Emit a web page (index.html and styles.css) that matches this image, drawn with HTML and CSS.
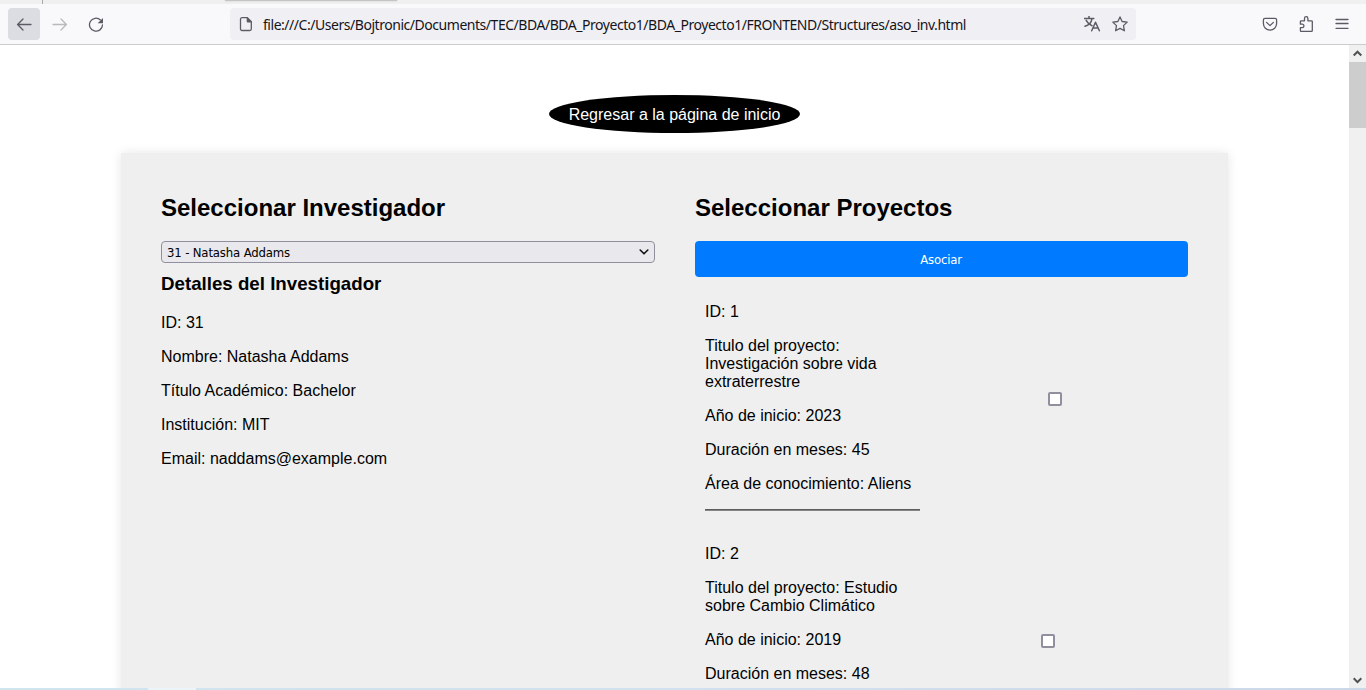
FILE: index.html
```html
<!DOCTYPE html>
<html lang="es">
<head>
<meta charset="utf-8">
<title>Asociar investigador</title>
<link rel="stylesheet" href="styles.css">
</head>
<body>
<div class="window">
  <div class="tabstrip"><i class="tab-divider"></i><i class="tab-shadow"></i></div>
  <header class="toolbar">
    <div class="nav">
      <span class="nav-btn active"><svg width="16" height="16" viewBox="0 0 16 16"><path d="M15 8.500H1.500M7 3 1.600 8.500 7 14"/></svg></span>
      <span class="nav-btn disabled"><svg width="16" height="16" viewBox="0 0 16 16"><path d="M1 8.500h13.500M9 3l5.400 5.500L9 14"/></svg></span>
      <span class="nav-btn"><svg width="16" height="16" viewBox="0 0 16 16"><path d="M12.400 3.900A6.500 6.500 0 1 0 14.500 8.800"/><path class="solid" d="M15 1.900v4.900a.5.500 0 0 1-.5.500H9.600z"/></svg></span>
    </div>
    <div class="urlbar">
      <svg width="16" height="16" viewBox="0 0 16 16"><path d="M4 1.700h5.300l4 4V13a1.500 1.500 0 0 1-1.500 1.500H4A1.500 1.500 0 0 1 2.500 13V3.200A1.500 1.500 0 0 1 4 1.700z"/><path class="solid" d="M8.700 1.500h1l4 4v1H9.700a1 1 0 0 1-1-1z"/></svg>
      <span class="url">file:///C:/Users/Bojtronic/Documents/TEC/BDA/BDA_Proyecto1/BDA_Proyecto1/FRONTEND/Structures/aso_inv.html</span>
      <svg class="translate" width="16" height="16" viewBox="0 0 16 16"><path d="M.2 2.500h9.600M5 .3v2.200M2.200 4.300C3.500 6.800 5.500 8.700 8 9.700M8 2.600C7.500 6 4.500 9.200 1 10.300M7.700 14.800 11.500 6.200l3.900 8.600M9 12h5"/></svg>
      <svg width="16" height="16" viewBox="0 0 16 16"><path d="M8 .9l2.100 4.600 5.100.6-3.700 3.500.9 5.200L8 12.400l-4.400 2.400.9-5.200L.8 6.100l5.100-.6z"/></svg>
    </div>
    <div class="tools">
      <svg width="16" height="16" viewBox="0 0 16 16"><path d="M3 2.300h10a1.600 1.600 0 0 1 1.600 1.600V7.500a6.600 6.600 0 0 1-13.200 0V3.900A1.600 1.600 0 0 1 3 2.300zM4.600 6.400 8 9.600l3.400-3.200"/></svg>
      <svg width="16" height="16" viewBox="0 0 16 16"><path d="M2.400 7.200V5.600a.8.800 0 0 1 .8-.8h3.300V2.400a1.700 1.700 0 0 1 3.400 0v2.400h3.600a.8.800 0 0 1 .8.800v9a.8.800 0 0 1-.8.800H3.200a.8.800 0 0 1-.8-.8v-2.900h1.800a1.700 1.700 0 0 0 0-3.500H2.400z"/></svg>
      <svg width="16" height="16" viewBox="0 0 16 16"><path d="M2 3.500h12M2 7.500h12M2 12.300h12"/></svg>
    </div>
  </header>
  <div class="viewport">
    <main class="page">
      <a class="home-link">Regresar a la página de inicio</a>
      <div class="card">
        <section class="column">
          <h2>Seleccionar Investigador</h2>
          <div class="select"><span>31 - Natasha Addams</span><svg width="10" height="6" viewBox="0 0 10 6"><path d="M1.200 1 5 4.800 8.800 1"/></svg></div>
          <h3>Detalles del Investigador</h3>
          <p>ID: 31</p>
          <p>Nombre: Natasha Addams</p>
          <p>Título Académico: Bachelor</p>
          <p>Institución: MIT</p>
          <p>Email: naddams@example.com</p>
        </section>
        <section class="column">
          <h2>Seleccionar Proyectos</h2>
          <button class="associate">Asociar</button>
          <div class="project">
            <div class="info">
              <p>ID: 1</p>
              <p>Titulo del proyecto: Investigación sobre vida extraterrestre</p>
              <p>Año de inicio: 2023</p>
              <p>Duración en meses: 45</p>
              <p class="area">Área de conocimiento: Aliens</p>
              <div class="rule"></div>
            </div>
            <div class="check"><i class="box"></i></div>
          </div>
          <div class="project second">
            <div class="info">
              <p>ID: 2</p>
              <p>Titulo del proyecto: Estudio sobre Cambio Climático</p>
              <p>Año de inicio: 2019</p>
              <p>Duración en meses: 48</p>
            </div>
            <div class="check"><i class="box"></i></div>
          </div>
        </section>
      </div>
    </main>
    <div class="scrollbar">
      <svg width="9" height="7" viewBox="0 0 9 7"><path d="M.7 5.500 4.500 1.700l3.800 3.800"/></svg>
      <i class="thumb"></i>
      <svg class="down" width="9" height="7" viewBox="0 0 9 7"><path d="M.7 1.300l3.800 3.800 3.800-3.800"/></svg>
    </div>
  </div>
  <footer class="taskbar"><i class="task"></i></footer>
</div>
</body>
</html>
```
FILE: styles.css
```css
* { box-sizing: border-box; }
body { margin: 0; overflow: hidden; background: #fff; color: #000; font: 16px/18px "Liberation Sans", Arial, sans-serif; }
.window { height: 690px; display: flex; flex-direction: column; }
svg { display: block; flex: none; fill: none; stroke: #5b5b66; stroke-width: 1.3; stroke-linecap: round; stroke-linejoin: round; }
svg .solid { fill: #5b5b66; stroke: none; }

.tabstrip { height: 4px; flex: none; display: flex; background: #f0f0f0; }
.tab-divider { width: 1px; margin-left: 42px; background: #aaa; }
.tab-shadow { width: 172px; height: 1px; margin-left: 182px; background: #c4c4c4; box-shadow: 0 0 2px #bbb; }

.toolbar { height: 41px; flex: none; display: flex; align-items: center; background: #f9f9fb; border-bottom: 1px solid #ccc; padding: 0 16px 0 8px; }
.nav { display: flex; gap: 4px; }
.nav-btn { width: 32px; height: 32px; display: flex; align-items: center; justify-content: center; border-radius: 4px; }
.active { background: #dcdce3; }
.disabled { opacity: .4; }
.urlbar { width: 906px; height: 32px; margin-left: 118px; padding: 0 8px; display: flex; align-items: center; background: #f0f0f4; border-radius: 4px; }
.url { margin-left: 9px; flex: 1; font: 14px/20px "Noto Sans", "Open Sans", sans-serif; letter-spacing: -.463px; color: #15141a; white-space: nowrap; padding-top: 2px; }
.translate { margin-right: 12px; stroke-width: 1.5; }
.tools { display: flex; gap: 20px; margin-left: auto; }

.viewport { flex: 1; min-height: 0; display: flex; overflow: hidden; }
.page { flex: 1; padding-top: 50px; display: flex; flex-direction: column; align-items: center; }
.home-link { flex: none; width: 251px; height: 38px; margin-bottom: 20px; background: #000; color: #fff; border-radius: 50%; line-height: 39px; text-align: center; white-space: nowrap; }
.card { flex: none; width: 1107px; min-height: 600px; padding: 41px 40px 0; display: grid; grid-template-columns: 494px 493px; column-gap: 40px; background: #efefef; box-shadow: 0 0 10px rgba(0,0,0,.1); }
h2 { margin: 0 0 20px; font-size: 24px; line-height: 27px; }
h3 { margin: 10px 0 20px; font-size: 18.72px; line-height: 21px; }
p { margin: 0 0 16px; }
.select { width: 494px; height: 22px; display: flex; align-items: center; justify-content: space-between; padding: 0 5px; border: 1px solid #8f8f9d; border-radius: 4px; background: #e9e9ed; font: 13px/20px "DejaVu Sans Condensed", "DejaVu Sans", sans-serif; font-stretch: condensed; letter-spacing: -.15px; }
.select span { padding-top: 1px; }
.select svg { stroke: #111; stroke-width: 1.6; }
.associate { display: block; width: 493px; height: 36px; padding: 1px 1px 0 0; border: 0; border-radius: 4px; background: #007bff; color: #fff; font: 13px/35px "DejaVu Sans Condensed", "DejaVu Sans", sans-serif; font-stretch: condensed; letter-spacing: -.2px; }
.project { display: flex; height: 224px; margin-top: 10px; padding-left: 10px; }
.info { width: 215px; padding-top: 16px; }
.second { margin-top: 18px; }
.rule { height: 2px; background: #5c5c5c; border-bottom: 1px solid #858585; }
.check { display: flex; align-items: center; padding-left: 128px; }
.second .check { padding-left: 121px; }
.box { width: 14px; height: 14px; border: 2px solid #8f8f9d; border-radius: 2px; background: #fff; }

.scrollbar { width: 17px; flex: none; display: flex; flex-direction: column; align-items: center; padding: 5px 0 4px; background: #f0f0f0; }
.scrollbar svg { stroke: #505050; stroke-width: 2; stroke-linecap: butt; stroke-linejoin: miter; }
.thumb { width: 17px; height: 66px; margin-top: 5px; background: #cdcdcd; }
.down { margin-top: auto; }
.taskbar { height: 2px; flex: none; display: flex; background: linear-gradient(90deg, #cfe6ef, #d0dfee 60%, #cbd8e9); }
.task { width: 48px; margin-left: 148px; background: #ebf5f9; }
```
